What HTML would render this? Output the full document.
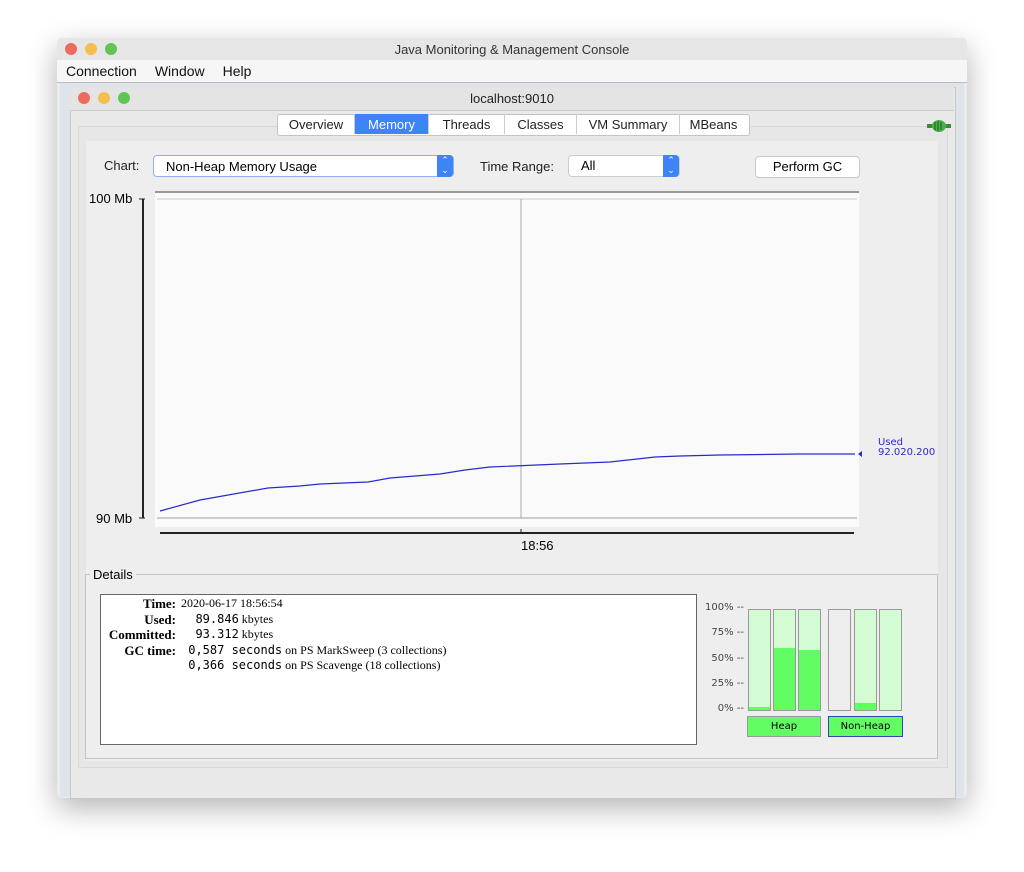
<!DOCTYPE html><html><head><style>
body{margin:0;width:1024px;height:872px;background:#fff;font-family:"Liberation Sans",sans-serif;position:relative;overflow:hidden}
.a{position:absolute}
.dot{position:absolute;width:12px;height:12px;border-radius:50%}
.tab{position:absolute;top:114px;height:20px;font-size:13px;line-height:21px;text-align:center;color:#222;border-right:1px solid #ccc}
.bar{position:absolute;width:21px;height:100px;border:1px solid #999;background:#d3fcd3}
.fill{position:absolute;left:0;right:0;bottom:0;background:#62fd62}
.pl{position:absolute;left:0;width:43px;text-align:right;font-size:10px;color:#444;font-family:"DejaVu Sans",sans-serif}
</style></head><body>
<div class="a" style="left:57px;top:38px;width:910px;height:760px;background:#ececec;box-shadow:0 10px 30px rgba(0,0,0,.3);border-radius:5px"></div>
<div class="a" style="left:57px;top:38px;width:910px;height:22px;background:#e6e6e6;border-radius:5px 5px 0 0;text-align:center;font-size:13px;line-height:23px;color:#333">Java Monitoring &amp; Management Console</div>
<div class="dot" style="left:65px;top:43px;background:#ed6a5e"></div><div class="dot" style="left:85px;top:43px;background:#f5bf4f"></div><div class="dot" style="left:105px;top:43px;background:#61c554"></div>
<div class="a" style="left:57px;top:60px;width:910px;height:22px;background:#f6f6f6;border-bottom:1px solid #bbb;font-size:14px;line-height:23px;color:#111"><span style="margin-left:9px">Connection</span><span style="margin-left:18px">Window</span><span style="margin-left:18px">Help</span></div>
<div class="a" style="left:60px;top:83px;width:904px;height:714px;background:#dfe3ea"></div>
<div class="a" style="left:70px;top:87px;width:884px;height:710px;background:#e9e9e9;border:1px solid #c8c8c8"></div>
<div class="a" style="left:70px;top:87px;width:884px;height:23px;background:#e4e4e4;border-bottom:1px solid #ccc;text-align:center;font-size:13px;line-height:24px;color:#222">localhost:9010</div>
<div class="dot" style="left:78px;top:92px;background:#ed6a5e"></div><div class="dot" style="left:98px;top:92px;background:#f5bf4f"></div><div class="dot" style="left:118px;top:92px;background:#61c554"></div>
<div class="a" style="left:78px;top:126px;width:868px;height:640px;background:#e6e6e6;border:1px solid #d8d8d8"></div>
<div class="a" style="left:86px;top:141px;width:852px;height:620px;background:#eeeeee"></div>
<div class="a" style="left:277px;top:114px;width:471px;height:20px;background:#fff;border:1px solid #c4c4c4;border-radius:3px"></div>
<div class="tab" style="left:278px;width:76px">Overview</div>
<div class="tab" style="left:355px;width:73px;background:#3d84f5;color:#fff">Memory</div>
<div class="tab" style="left:429px;width:75px">Threads</div>
<div class="tab" style="left:505px;width:71px">Classes</div>
<div class="tab" style="left:577px;width:102px">VM Summary</div>
<div class="tab" style="left:680px;width:67px;border:none">MBeans</div>
<svg class="a" style="left:926px;top:118px" width="26" height="16"><path d="M1 8h24" stroke="#3a8a3a" stroke-width="4"/><ellipse cx="13" cy="8" rx="7" ry="6" fill="#4cb04c"/><path d="M9 4v8M12 3v10M15 4v8" stroke="#1d5a1d"/></svg>
<div class="a" style="left:104px;top:158px;font-size:13px;color:#222">Chart:</div>
<div class="a" style="left:153px;top:155px;width:299px;height:20px;background:#fff;border:1px solid #8fb0e8;border-radius:4px;font-size:13px;line-height:21px"><span style="margin-left:12px">Non-Heap Memory Usage</span></div>
<div class="a" style="left:437px;top:155px;width:16px;height:22px;background:#3d84f5;border-radius:0 4px 4px 0;color:#fff;font-size:9px;text-align:center;line-height:10px">⌃<br>⌄</div>
<div class="a" style="left:480px;top:159px;font-size:13px;color:#222">Time Range:</div>
<div class="a" style="left:568px;top:155px;width:110px;height:20px;background:#fff;border:1px solid #ccc;border-radius:4px;font-size:13px;line-height:20px"><span style="margin-left:12px">All</span></div>
<div class="a" style="left:663px;top:155px;width:16px;height:22px;background:#3d84f5;border-radius:0 4px 4px 0;color:#fff;font-size:9px;text-align:center;line-height:10px">⌃<br>⌄</div>
<div class="a" style="left:755px;top:156px;width:103px;height:20px;background:#fff;border:1px solid #c8c8c8;border-radius:4px;font-size:13px;line-height:20px;text-align:center">Perform GC</div>
<div class="a" style="left:155px;top:191px;width:704px;height:334px;background:#fafafa;border-top:2px solid #999"></div>
<svg class="a" style="left:0;top:0" width="1024" height="872">
<line x1="157" y1="199" x2="857" y2="199" stroke="#ccc"/><line x1="157" y1="518" x2="857" y2="518" stroke="#ccc" stroke-width="2"/>
<line x1="521" y1="199" x2="521" y2="518" stroke="#aaa"/>
<line x1="143" y1="199" x2="143" y2="518" stroke="#222" stroke-width="2"/>
<line x1="139" y1="199" x2="145" y2="199" stroke="#222"/><line x1="139" y1="518" x2="145" y2="518" stroke="#222"/>
<line x1="160" y1="533" x2="854" y2="533" stroke="#222" stroke-width="2"/><line x1="521" y1="529" x2="521" y2="534" stroke="#222"/>
<polyline fill="none" stroke="#2a2acc" stroke-width="1.2" points="160,511 200,500 268,488 300,486 320,484 368,482 390,478 440,474 465,470 490,467 560,464 610,462 655,457 680,456 720,455 800,454 855,454"/>
<path d="M862 451v6l-4-3z" fill="#2a2acc"/>
</svg>
<div class="a" style="left:89px;top:191px;font-size:13px">100 Mb</div>
<div class="a" style="left:96px;top:511px;font-size:13px">90 Mb</div>
<div class="a" style="left:521px;top:538px;font-size:13px">18:56</div>
<div class="a" style="left:878px;top:438px;font-size:10px;line-height:10px;color:#2a2acc;font-family:'DejaVu Sans',sans-serif">Used<br>92.020.200</div>
<div class="a" style="left:85px;top:574px;width:851px;height:183px;border:1px solid #c4c4c4"></div>
<div class="a" style="left:90px;top:567px;background:#eee;padding:0 3px;font-size:13px">Details</div>
<div class="a" style="left:100px;top:594px;width:595px;height:149px;background:#fff;border:1px solid #666"></div>
<div class="a" style="left:100px;top:596px;font-family:'Liberation Serif',serif;font-size:12px;line-height:15.5px">
<div style="position:absolute;left:0;width:76px;text-align:right;font-weight:bold;font-size:13px;white-space:nowrap">Time:<br>Used:<br>Committed:<br>GC time:</div>
<div style="position:absolute;left:81px;white-space:nowrap">2020-06-17 18:56:54<br><span style="font-family:'DejaVu Sans Mono',monospace;font-size:12px">&nbsp;&nbsp;89.846</span> kbytes<br><span style="font-family:'DejaVu Sans Mono',monospace;font-size:12px">&nbsp;&nbsp;93.312</span> kbytes<br><span style="font-family:'DejaVu Sans Mono',monospace;font-size:12px">&nbsp;0,587 seconds</span> on PS MarkSweep (3 collections)<br><span style="font-family:'DejaVu Sans Mono',monospace;font-size:12px">&nbsp;0,366 seconds</span> on PS Scavenge (18 collections)</div></div>
<div class="a" style="left:701px;top:602px;width:45px;height:115px">
<div class="pl" style="top:0">100% --</div><div class="pl" style="top:25px">75% --</div><div class="pl" style="top:51px">50% --</div><div class="pl" style="top:76px">25% --</div><div class="pl" style="top:101px">0% --</div></div>
<div class="bar" style="left:748px;top:609px"><div class="fill" style="height:3px"></div></div>
<div class="bar" style="left:773px;top:609px"><div class="fill" style="height:62px"></div></div>
<div class="bar" style="left:798px;top:609px"><div class="fill" style="height:60px"></div></div>
<div class="bar" style="left:828px;top:609px;background:#eee"></div>
<div class="bar" style="left:854px;top:609px"><div class="fill" style="height:7px"></div></div>
<div class="bar" style="left:879px;top:609px"></div>
<div class="a" style="left:747px;top:716px;width:72px;height:19px;background:#62fd62;border:1px solid #999;font-size:10px;text-align:center;line-height:20px;font-family:'DejaVu Sans',sans-serif">Heap</div>
<div class="a" style="left:828px;top:716px;width:73px;height:19px;background:#62fd62;border:1px solid #3344bb;font-size:10px;text-align:center;line-height:20px;font-family:'DejaVu Sans',sans-serif">Non-Heap</div>
</body></html>
